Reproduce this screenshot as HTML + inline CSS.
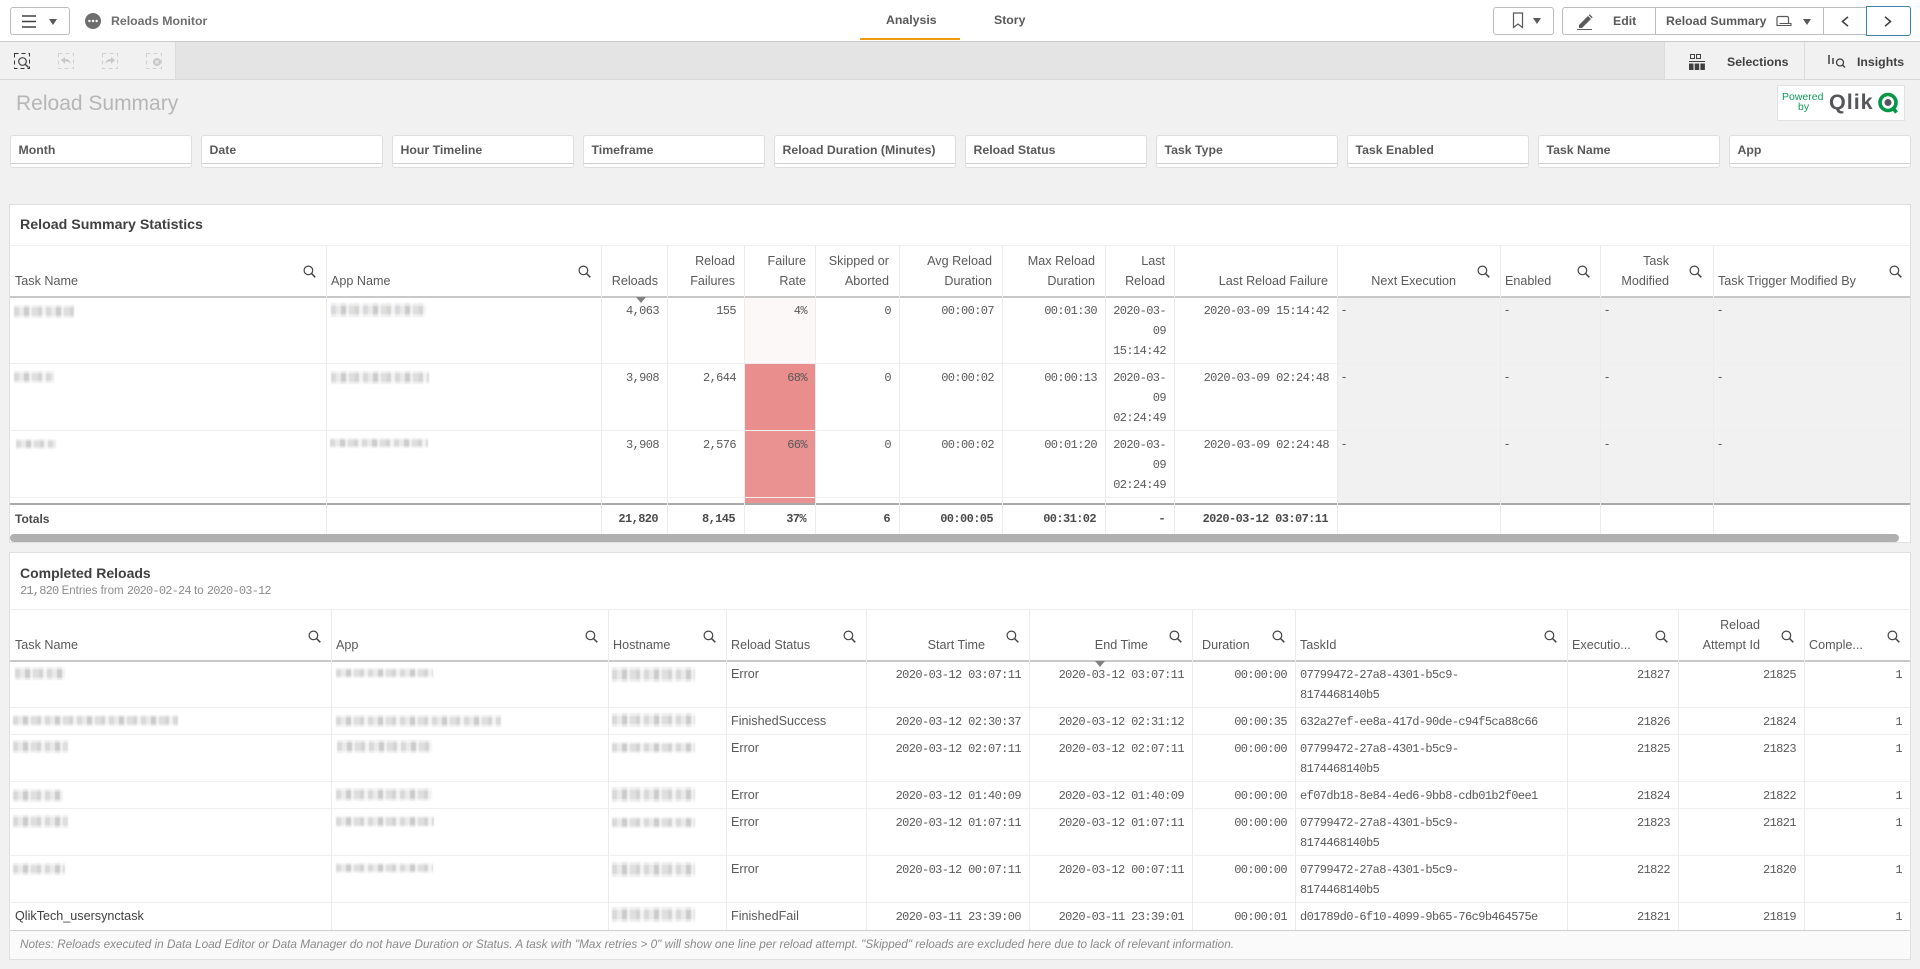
<!DOCTYPE html>
<html lang="en"><head><meta charset="utf-8"><title>Reloads Monitor</title>
<style>
html,body{margin:0;padding:0}
body{position:relative;width:1920px;height:969px;overflow:hidden;background:#f1f1f1;font-family:"Liberation Sans",sans-serif;font-size:12.6px;color:#595959}
div,span,svg{position:absolute;box-sizing:border-box}
.t{white-space:nowrap;line-height:20px;height:20px}
.b{font-weight:bold;font-size:12px}
.m{font-family:"Liberation Mono",monospace;font-size:12px;letter-spacing:-.6px;margin-top:1px}
.mb{font-family:"Liberation Mono",monospace;font-size:12px;font-weight:bold;letter-spacing:-.6px;color:#4a4a4a}
.v{width:1px;background:#ececec}
.h{left:10px;width:1900px;height:1px;background:#efefef}
.f{width:182px;height:33px;top:135px;background:#fff;border:1px solid #dedede;border-radius:3px}
.f i{position:absolute;left:0;right:0;top:27px;height:1px;background:#cfcfcf}
.f b{position:absolute;left:8px;top:4px;line-height:20px;font-size:12.3px;color:#595959;white-space:nowrap}
.x{background:linear-gradient(180deg,rgba(255,255,255,.55) 0 20%,rgba(255,255,255,0) 20% 80%,rgba(255,255,255,.55) 80% 100%),repeating-linear-gradient(90deg,#d6d4d7 0 5px,#e9e8e9 5px 10px,#c6c6c6 10px 15px,#efefef 15px 18px,#dcdadb 18px 24px,#cfcfcf 24px 28px,#f2f2f2 28px 32px);opacity:.9;filter:blur(.6px)}
.s{width:13px;height:13px}
.btn{border:1px solid #bdbdbd;border-radius:3px;background:#fff}
</style></head><body>
<svg width="0" height="0" style="left:0;top:0"><defs><symbol id="s" viewBox="0 0 13 13"><circle cx="5.4" cy="5.4" r="4.3" fill="none" stroke="#444" stroke-width="1.2"/><path d="M8.5 8.5L12.3 12.3" stroke="#444" stroke-width="1.5" fill="none"/></symbol></defs></svg>

<!-- top bar -->
<div style="left:0;top:0;width:1920px;height:41px;background:#fff"></div>
<div style="left:0;top:41px;width:1920px;height:1px;background:#ccc"></div>
<div class="btn" style="left:10px;top:7px;width:60px;height:28px"></div>
<svg style="left:21px;top:15px" width="16" height="13"><path d="M1 1h14M1 6.5h14M1 12h14" stroke="#404040" stroke-width="1.6"/></svg>
<svg style="left:49px;top:19px" width="8" height="6"><path d="M0 0h8L4 6z" fill="#595959"/></svg>
<svg style="left:85px;top:13px" width="16" height="16"><circle cx="8" cy="8" r="8" fill="#6e6e6e"/><circle cx="4.4" cy="8" r="1.2" fill="#fff"/><circle cx="8" cy="8" r="1.2" fill="#fff"/><circle cx="11.6" cy="8" r="1.2" fill="#fff"/></svg>
<span class="t b" style="left:111px;top:11px;font-size:12.3px;color:#6e6e6e">Reloads Monitor</span>
<span class="t b" style="left:886px;top:10px;font-size:12.3px">Analysis</span>
<span class="t b" style="left:994px;top:10px;font-size:12.3px">Story</span>
<div style="left:860px;top:38px;width:100px;height:2px;background:#f09a10"></div>
<div class="btn" style="left:1493px;top:7px;width:61px;height:28px"></div>
<svg style="left:1512px;top:12px" width="12" height="17"><path d="M1.5 1h9v14.5L6 12 1.5 15.5z" fill="none" stroke="#595959" stroke-width="1.2"/></svg>
<svg style="left:1533px;top:18px" width="8" height="6"><path d="M0 0h8L4 6z" fill="#595959"/></svg>
<div class="btn" style="left:1562px;top:7px;width:348px;height:28px"></div>
<div style="left:1655px;top:8px;width:1px;height:26px;background:#bdbdbd"></div>
<div style="left:1823px;top:8px;width:1px;height:26px;background:#bdbdbd"></div>
<div style="left:1866px;top:6px;width:45px;height:30px;border:1.5px solid #3d80a8;border-radius:0 3px 3px 0;background:#fff"></div>
<svg style="left:1577px;top:13px" width="16" height="17"><path d="M2 12L11 3l3 3-9 9H2z" fill="#595959"/><path d="M11.7 2.3l1-1 3 3-1 1z" fill="#595959"/><path d="M0 16.5h15" stroke="#595959"/></svg>
<span class="t b" style="left:1613px;top:11px;font-size:12.3px">Edit</span>
<span class="t b" style="left:1666px;top:11px;font-size:12.3px">Reload Summary</span>
<svg style="left:1775px;top:15px" width="17" height="12"><path d="M2 10.500V3a1.500 1.500 0 0 1 1.500-1.500h8.500a1.500 1.500 0 0 1 1.500 1.500v5.500" fill="none" stroke="#595959" stroke-width="1.2"/><path d="M1.500 10.500H16V8.500H4.500" fill="none" stroke="#595959" stroke-width="1.100"/></svg>
<svg style="left:1803px;top:19px" width="8" height="6"><path d="M0 0h8L4 6z" fill="#595959"/></svg>
<svg style="left:1841px;top:16px" width="8" height="11"><path d="M7 .8L1.5 5.5 7 10.2" fill="none" stroke="#404040" stroke-width="1.6"/></svg>
<svg style="left:1884px;top:16px" width="8" height="11"><path d="M1 .8L6.5 5.5 1 10.2" fill="none" stroke="#404040" stroke-width="1.6"/></svg>

<!-- toolbar -->
<div style="left:0;top:42px;width:1920px;height:37px;background:#e4e4e4"></div>
<div style="left:0;top:42px;width:176px;height:37px;background:#f1f1f1;border-right:1px solid #dcdcdc"></div>
<div style="left:1664px;top:42px;width:256px;height:37px;background:#f1f1f1;border-left:1px solid #dcdcdc"></div>
<div style="left:1804px;top:42px;width:1px;height:37px;background:#dcdcdc"></div>
<div style="left:0;top:79px;width:1920px;height:1px;background:#d8d8d8"></div>
<svg style="left:14px;top:53px" width="17" height="17"><rect x=".5" y=".5" width="15" height="15" fill="none" stroke="#333" stroke-dasharray="4 3"/><circle cx="8.5" cy="8.5" r="3.8" fill="none" stroke="#444" stroke-width="1.2"/><path d="M11 11l3.5 3.5" stroke="#444" stroke-width="1.4"/></svg>
<svg style="left:58px;top:53px" width="17" height="17"><rect x=".5" y=".5" width="15" height="15" fill="none" stroke="#d4cfd2" stroke-dasharray="4 3"/><path d="M3 7l4-3v2c4 0 5 2 6 5-2-2-3-2.500-6-2.500V11z" fill="#c8c8c8"/></svg>
<svg style="left:102px;top:53px" width="17" height="17"><rect x=".5" y=".5" width="15" height="15" fill="none" stroke="#d4cfd2" stroke-dasharray="4 3"/><path d="M13 7L9 4v2c-4 0-5 2-6 5 2-2 3-2.500 6-2.500V11z" fill="#c8c8c8"/></svg>
<svg style="left:146px;top:53px" width="17" height="17"><rect x=".5" y=".5" width="15" height="15" fill="none" stroke="#d4cfd2" stroke-dasharray="4 3"/><circle cx="11" cy="9" r="4" fill="#c8c8c8"/><path d="M9.500 7.500l3 3m0-3l-3 3" stroke="#f1f1f1"/></svg>
<svg style="left:1689px;top:54px" width="17" height="17"><rect x="1.500" y=".5" width="4" height="4" fill="none" stroke="#404040"/><rect x="7.500" y=".5" width="4" height="4" fill="none" stroke="#404040"/><path d="M0 7.500h16" stroke="#404040"/><rect x="0" y="9.500" width="4.500" height="6.500" fill="#404040"/><rect x="5.700" y="9.500" width="4.500" height="6.500" fill="#404040"/><rect x="11.400" y="9.500" width="4.500" height="6.500" fill="#404040"/></svg>
<span class="t b" style="left:1727px;top:52px;font-size:12.3px;color:#404040">Selections</span>
<svg style="left:1828px;top:55px" width="18" height="13"><path d="M1 0v9M5 3v6" stroke="#404040" stroke-width="1.500"/><circle cx="12" cy="7.500" r="3.500" fill="none" stroke="#404040" stroke-width="1.300"/><path d="M14.500 10l2.500 2.500" stroke="#404040" stroke-width="1.400"/></svg>
<span class="t b" style="left:1857px;top:52px;font-size:12.3px;color:#404040">Insights</span>

<!-- sheet title -->
<span class="t" style="left:16px;top:93px;font-size:21px;line-height:22px;height:24px;color:#b6b6b6">Reload Summary</span>
<div style="left:1777px;top:85px;width:128px;height:36px;background:#fff;border:1px solid #e2e2e2"></div>
<span class="t" style="left:1782px;top:91px;font-size:10.500px;line-height:12px;height:12px;color:#0f9d58">Powered</span>
<span class="t" style="left:1798px;top:101px;font-size:10.500px;line-height:12px;height:12px;color:#0f9d58">by</span>
<span class="t" style="left:1829px;top:90px;font-size:21.500px;font-weight:bold;letter-spacing:1px;line-height:25px;height:25px;color:#54565a">Qlik</span>
<svg style="left:1877px;top:91px" width="24" height="24"><circle cx="11" cy="11.500" r="8" fill="none" stroke="#009845" stroke-width="3.600"/><circle cx="11" cy="11.500" r="3.500" fill="#54565a"/><path d="M15 16l4.500 5.500" stroke="#009845" stroke-width="3.600"/></svg>

<!-- filters -->
<div class="f" style="left:9.500px"><i></i><b>Month</b></div>
<div class="f" style="left:200.500px"><i></i><b>Date</b></div>
<div class="f" style="left:391.500px"><i></i><b>Hour Timeline</b></div>
<div class="f" style="left:582.500px"><i></i><b>Timeframe</b></div>
<div class="f" style="left:773.500px"><i></i><b>Reload Duration (Minutes)</b></div>
<div class="f" style="left:964.500px"><i></i><b>Reload Status</b></div>
<div class="f" style="left:1155.500px"><i></i><b>Task Type</b></div>
<div class="f" style="left:1346.500px"><i></i><b>Task Enabled</b></div>
<div class="f" style="left:1537.500px"><i></i><b>Task Name</b></div>
<div class="f" style="left:1728.500px"><i></i><b>App</b></div>

<!-- card 1 -->
<div style="left:9px;top:204px;width:1902px;height:339px;background:#fff;border:1px solid #e0e0e0"></div>
<span class="t b" style="left:20px;top:215px;font-size:14.200px;color:#404040">Reload Summary Statistics</span>
<div class="h" style="top:245px"></div>
<div style="left:1338px;top:297px;width:572px;height:206px;background:#f1f1f1"></div>
<div style="left:745px;top:297px;width:70px;height:66px;background:#fcf8f7"></div>
<div style="left:745px;top:364px;width:70px;height:66px;background:#e98d8d"></div>
<div style="left:745px;top:431px;width:70px;height:66px;background:#ea9292"></div>
<div style="left:745px;top:498px;width:70px;height:5px;background:#ea9292"></div>
<div class="h" style="top:296px;height:1.500px;background:#c8c8c8"></div>
<div class="h" style="top:363px"></div><div class="h" style="top:430px"></div><div class="h" style="top:497px"></div>
<div class="h" style="top:503px;height:1.500px;background:#aaa"></div>
<div class="v" style="left:326px;top:246px;height:288px"></div>
<div class="v" style="left:601px;top:246px;height:288px"></div>
<div class="v" style="left:667px;top:246px;height:288px"></div>
<div class="v" style="left:744px;top:246px;height:288px"></div>
<div class="v" style="left:815px;top:246px;height:288px"></div>
<div class="v" style="left:899px;top:246px;height:288px"></div>
<div class="v" style="left:1002px;top:246px;height:288px"></div>
<div class="v" style="left:1105px;top:246px;height:288px"></div>
<div class="v" style="left:1174px;top:246px;height:288px"></div>
<div class="v" style="left:1337px;top:246px;height:288px"></div>
<div class="v" style="left:1500px;top:246px;height:288px"></div>
<div class="v" style="left:1600px;top:246px;height:288px"></div>
<div class="v" style="left:1713px;top:246px;height:288px"></div>

<span class="t" style="left:15px;top:271px">Task Name</span>
<span class="t" style="left:331px;top:271px">App Name</span>
<span class="t" style="right:1262px;top:271px">Reloads</span>
<span class="t" style="right:1185px;top:251px">Reload</span><span class="t" style="right:1185px;top:271px">Failures</span>
<span class="t" style="right:1114px;top:251px">Failure</span><span class="t" style="right:1114px;top:271px">Rate</span>
<span class="t" style="right:1031px;top:251px">Skipped or</span><span class="t" style="right:1031px;top:271px">Aborted</span>
<span class="t" style="right:928px;top:251px">Avg Reload</span><span class="t" style="right:928px;top:271px">Duration</span>
<span class="t" style="right:825px;top:251px">Max Reload</span><span class="t" style="right:825px;top:271px">Duration</span>
<span class="t" style="right:755px;top:251px">Last</span><span class="t" style="right:755px;top:271px">Reload</span>
<span class="t" style="right:592px;top:271px">Last Reload Failure</span>
<span class="t" style="right:464px;top:271px">Next Execution</span>
<span class="t" style="left:1505px;top:271px">Enabled</span>
<span class="t" style="right:251px;top:251px">Task</span><span class="t" style="right:251px;top:271px">Modified</span>
<span class="t" style="left:1718px;top:271px">Task Trigger Modified By</span>
<svg class="s" style="left:303px;top:265px"><use href="#s"/></svg>
<svg class="s" style="left:578px;top:265px"><use href="#s"/></svg>
<svg class="s" style="left:1477px;top:265px"><use href="#s"/></svg>
<svg class="s" style="left:1577px;top:265px"><use href="#s"/></svg>
<svg class="s" style="left:1689px;top:265px"><use href="#s"/></svg>
<svg class="s" style="left:1889px;top:265px"><use href="#s"/></svg>
<svg style="left:636px;top:297px" width="10" height="6"><path d="M0 0h10L5 6z" fill="#808080"/></svg>

<div class="x" style="left:14px;top:305px;width:60px;height:13px"></div>
<div class="x" style="left:331px;top:303px;width:95px;height:14px"></div>
<div class="x" style="left:14px;top:371px;width:40px;height:12px"></div>
<div class="x" style="left:331px;top:371px;width:98px;height:13px"></div>
<div class="x" style="left:16px;top:439px;width:40px;height:10px"></div>
<div class="x" style="left:330px;top:438px;width:98px;height:10px"></div>

<span class="t m" style="right:1261px;top:300px">4,063</span><span class="t m" style="right:1184px;top:300px">155</span><span class="t m" style="right:1113px;top:300px">4%</span><span class="t m" style="right:1029px;top:300px">0</span><span class="t m" style="right:926px;top:300px">00:00:07</span><span class="t m" style="right:823px;top:300px">00:01:30</span><span class="t m" style="right:754px;top:300px">2020-03-</span><span class="t m" style="right:754px;top:320px">09</span><span class="t m" style="right:754px;top:340px">15:14:42</span><span class="t m" style="right:591px;top:300px">2020-03-09 15:14:42</span>
<span class="t m" style="right:1261px;top:367px">3,908</span><span class="t m" style="right:1184px;top:367px">2,644</span><span class="t m" style="right:1113px;top:367px">68%</span><span class="t m" style="right:1029px;top:367px">0</span><span class="t m" style="right:926px;top:367px">00:00:02</span><span class="t m" style="right:823px;top:367px">00:00:13</span><span class="t m" style="right:754px;top:367px">2020-03-</span><span class="t m" style="right:754px;top:387px">09</span><span class="t m" style="right:754px;top:407px">02:24:49</span><span class="t m" style="right:591px;top:367px">2020-03-09 02:24:48</span>
<span class="t m" style="right:1261px;top:434px">3,908</span><span class="t m" style="right:1184px;top:434px">2,576</span><span class="t m" style="right:1113px;top:434px">66%</span><span class="t m" style="right:1029px;top:434px">0</span><span class="t m" style="right:926px;top:434px">00:00:02</span><span class="t m" style="right:823px;top:434px">00:01:20</span><span class="t m" style="right:754px;top:434px">2020-03-</span><span class="t m" style="right:754px;top:454px">09</span><span class="t m" style="right:754px;top:474px">02:24:49</span><span class="t m" style="right:591px;top:434px">2020-03-09 02:24:48</span>
<span class="t" style="left:1342px;top:300px">-</span><span class="t" style="left:1505px;top:300px">-</span><span class="t" style="left:1605px;top:300px">-</span><span class="t" style="left:1718px;top:300px">-</span>
<span class="t" style="left:1342px;top:367px">-</span><span class="t" style="left:1505px;top:367px">-</span><span class="t" style="left:1605px;top:367px">-</span><span class="t" style="left:1718px;top:367px">-</span>
<span class="t" style="left:1342px;top:434px">-</span><span class="t" style="left:1505px;top:434px">-</span><span class="t" style="left:1605px;top:434px">-</span><span class="t" style="left:1718px;top:434px">-</span>

<span class="t b" style="left:15px;top:509px;color:#4a4a4a">Totals</span>
<span class="t mb" style="right:1262px;top:509px">21,820</span><span class="t mb" style="right:1185px;top:509px">8,145</span><span class="t mb" style="right:1114px;top:509px">37%</span><span class="t mb" style="right:1030px;top:509px">6</span><span class="t mb" style="right:927px;top:509px">00:00:05</span><span class="t mb" style="right:824px;top:509px">00:31:02</span><span class="t mb" style="right:755px;top:509px">-</span><span class="t mb" style="right:592px;top:509px">2020-03-12 03:07:11</span>
<div style="left:10px;top:534px;width:1889px;height:8px;background:#b0b0b0;border-radius:4px"></div>

<!-- card 2 -->
<div style="left:9px;top:552px;width:1902px;height:408px;background:#fff;border:1px solid #e0e0e0"></div>
<span class="t b" style="left:20px;top:563px;font-size:14px;color:#404040">Completed Reloads</span>
<span class="t" style="left:20px;top:581px;font-size:11.500px;color:#8c8c8c"><span style="position:static;letter-spacing:-.8px" class="m">21,820</span> Entries from <span style="position:static;letter-spacing:-.8px" class="m">2020-02-24</span> to <span style="position:static;letter-spacing:-.8px" class="m">2020-03-12</span></span>
<div class="h" style="top:609px"></div>
<div class="h" style="top:660px;height:1.500px;background:#c8c8c8"></div>
<div class="h" style="top:707px"></div><div class="h" style="top:734px"></div><div class="h" style="top:781px"></div><div class="h" style="top:808px"></div><div class="h" style="top:855px"></div><div class="h" style="top:902px"></div>
<div style="left:10px;top:930px;width:1900px;height:29px;background:#fafafa;border-top:1.500px solid #d0d0d0"></div>
<div class="v" style="left:331px;top:610px;height:320px"></div>
<div class="v" style="left:608px;top:610px;height:320px"></div>
<div class="v" style="left:726px;top:610px;height:320px"></div>
<div class="v" style="left:866px;top:610px;height:320px"></div>
<div class="v" style="left:1029px;top:610px;height:320px"></div>
<div class="v" style="left:1192px;top:610px;height:320px"></div>
<div class="v" style="left:1295px;top:610px;height:320px"></div>
<div class="v" style="left:1567px;top:610px;height:320px"></div>
<div class="v" style="left:1678px;top:610px;height:320px"></div>
<div class="v" style="left:1804px;top:610px;height:320px"></div>

<span class="t" style="left:15px;top:635px">Task Name</span>
<span class="t" style="left:336px;top:635px">App</span>
<span class="t" style="left:613px;top:635px">Hostname</span>
<span class="t" style="left:731px;top:635px">Reload Status</span>
<span class="t" style="right:935px;top:635px">Start Time</span>
<span class="t" style="right:772px;top:635px">End Time</span>
<span class="t" style="left:1202px;top:635px">Duration</span>
<span class="t" style="left:1300px;top:635px">TaskId</span>
<span class="t" style="left:1572px;top:635px">Executio...</span>
<span class="t" style="right:160px;top:615px">Reload</span><span class="t" style="right:160px;top:635px">Attempt Id</span>
<span class="t" style="left:1809px;top:635px">Comple...</span>
<svg class="s" style="left:308px;top:630px"><use href="#s"/></svg>
<svg class="s" style="left:585px;top:630px"><use href="#s"/></svg>
<svg class="s" style="left:703px;top:630px"><use href="#s"/></svg>
<svg class="s" style="left:843px;top:630px"><use href="#s"/></svg>
<svg class="s" style="left:1006px;top:630px"><use href="#s"/></svg>
<svg class="s" style="left:1169px;top:630px"><use href="#s"/></svg>
<svg class="s" style="left:1272px;top:630px"><use href="#s"/></svg>
<svg class="s" style="left:1544px;top:630px"><use href="#s"/></svg>
<svg class="s" style="left:1655px;top:630px"><use href="#s"/></svg>
<svg class="s" style="left:1781px;top:630px"><use href="#s"/></svg>
<svg class="s" style="left:1887px;top:630px"><use href="#s"/></svg>
<svg style="left:1095px;top:661px" width="10" height="6"><path d="M0 0h10L5 6z" fill="#808080"/></svg>

<div class="x" style="left:15px;top:667px;width:50px;height:13px"></div><div class="x" style="left:336px;top:668px;width:97px;height:10px"></div><div class="x" style="left:612px;top:667px;width:83px;height:15px"></div>
<div class="x" style="left:13px;top:715px;width:165px;height:11px"></div><div class="x" style="left:336px;top:715px;width:165px;height:12px"></div><div class="x" style="left:612px;top:713px;width:83px;height:14px"></div>
<div class="x" style="left:13px;top:740px;width:55px;height:13px"></div><div class="x" style="left:337px;top:740px;width:95px;height:13px"></div><div class="x" style="left:612px;top:742px;width:83px;height:11px"></div>
<div class="x" style="left:13px;top:789px;width:50px;height:13px"></div><div class="x" style="left:336px;top:788px;width:96px;height:13px"></div><div class="x" style="left:612px;top:787px;width:83px;height:15px"></div>
<div class="x" style="left:13px;top:815px;width:55px;height:13px"></div><div class="x" style="left:336px;top:816px;width:98px;height:11px"></div><div class="x" style="left:612px;top:817px;width:83px;height:11px"></div>
<div class="x" style="left:13px;top:863px;width:52px;height:12px"></div><div class="x" style="left:336px;top:863px;width:97px;height:10px"></div><div class="x" style="left:612px;top:862px;width:83px;height:15px"></div>
<span class="t" style="left:15px;top:906px;color:#404040">QlikTech_usersynctask</span><div class="x" style="left:612px;top:907px;width:83px;height:15px"></div>

<span class="t" style="left:731px;top:664px">Error</span><span class="t m" style="right:899px;top:664px">2020-03-12 03:07:11</span><span class="t m" style="right:736px;top:664px">2020-03-12 03:07:11</span><span class="t m" style="right:633px;top:664px">00:00:00</span><span class="t m" style="left:1300px;top:664px">07799472-27a8-4301-b5c9-</span><span class="t m" style="left:1300px;top:684px">8174468140b5</span><span class="t m" style="right:250px;top:664px">21827</span><span class="t m" style="right:124px;top:664px">21825</span><span class="t m" style="right:18px;top:664px">1</span>
<span class="t" style="left:731px;top:711px">FinishedSuccess</span><span class="t m" style="right:899px;top:711px">2020-03-12 02:30:37</span><span class="t m" style="right:736px;top:711px">2020-03-12 02:31:12</span><span class="t m" style="right:633px;top:711px">00:00:35</span><span class="t m" style="left:1300px;top:711px">632a27ef-ee8a-417d-90de-c94f5ca88c66</span><span class="t m" style="right:250px;top:711px">21826</span><span class="t m" style="right:124px;top:711px">21824</span><span class="t m" style="right:18px;top:711px">1</span>
<span class="t" style="left:731px;top:738px">Error</span><span class="t m" style="right:899px;top:738px">2020-03-12 02:07:11</span><span class="t m" style="right:736px;top:738px">2020-03-12 02:07:11</span><span class="t m" style="right:633px;top:738px">00:00:00</span><span class="t m" style="left:1300px;top:738px">07799472-27a8-4301-b5c9-</span><span class="t m" style="left:1300px;top:758px">8174468140b5</span><span class="t m" style="right:250px;top:738px">21825</span><span class="t m" style="right:124px;top:738px">21823</span><span class="t m" style="right:18px;top:738px">1</span>
<span class="t" style="left:731px;top:785px">Error</span><span class="t m" style="right:899px;top:785px">2020-03-12 01:40:09</span><span class="t m" style="right:736px;top:785px">2020-03-12 01:40:09</span><span class="t m" style="right:633px;top:785px">00:00:00</span><span class="t m" style="left:1300px;top:785px">ef07db18-8e84-4ed6-9bb8-cdb01b2f0ee1</span><span class="t m" style="right:250px;top:785px">21824</span><span class="t m" style="right:124px;top:785px">21822</span><span class="t m" style="right:18px;top:785px">1</span>
<span class="t" style="left:731px;top:812px">Error</span><span class="t m" style="right:899px;top:812px">2020-03-12 01:07:11</span><span class="t m" style="right:736px;top:812px">2020-03-12 01:07:11</span><span class="t m" style="right:633px;top:812px">00:00:00</span><span class="t m" style="left:1300px;top:812px">07799472-27a8-4301-b5c9-</span><span class="t m" style="left:1300px;top:832px">8174468140b5</span><span class="t m" style="right:250px;top:812px">21823</span><span class="t m" style="right:124px;top:812px">21821</span><span class="t m" style="right:18px;top:812px">1</span>
<span class="t" style="left:731px;top:859px">Error</span><span class="t m" style="right:899px;top:859px">2020-03-12 00:07:11</span><span class="t m" style="right:736px;top:859px">2020-03-12 00:07:11</span><span class="t m" style="right:633px;top:859px">00:00:00</span><span class="t m" style="left:1300px;top:859px">07799472-27a8-4301-b5c9-</span><span class="t m" style="left:1300px;top:879px">8174468140b5</span><span class="t m" style="right:250px;top:859px">21822</span><span class="t m" style="right:124px;top:859px">21820</span><span class="t m" style="right:18px;top:859px">1</span>
<span class="t" style="left:731px;top:906px">FinishedFail</span><span class="t m" style="right:899px;top:906px">2020-03-11 23:39:00</span><span class="t m" style="right:736px;top:906px">2020-03-11 23:39:01</span><span class="t m" style="right:633px;top:906px">00:00:01</span><span class="t m" style="left:1300px;top:906px">d01789d0-6f10-4099-9b65-76c9b464575e</span><span class="t m" style="right:250px;top:906px">21821</span><span class="t m" style="right:124px;top:906px">21819</span><span class="t m" style="right:18px;top:906px">1</span>

<span class="t" style="left:20px;top:935px;font-size:11.750px;font-style:italic;color:#8a8a8a">Notes: Reloads executed in Data Load Editor or Data Manager do not have Duration or Status. A task with "Max retries &gt; 0" will show one line per reload attempt. "Skipped" reloads are excluded here due to lack of relevant information.</span>
</body></html>
